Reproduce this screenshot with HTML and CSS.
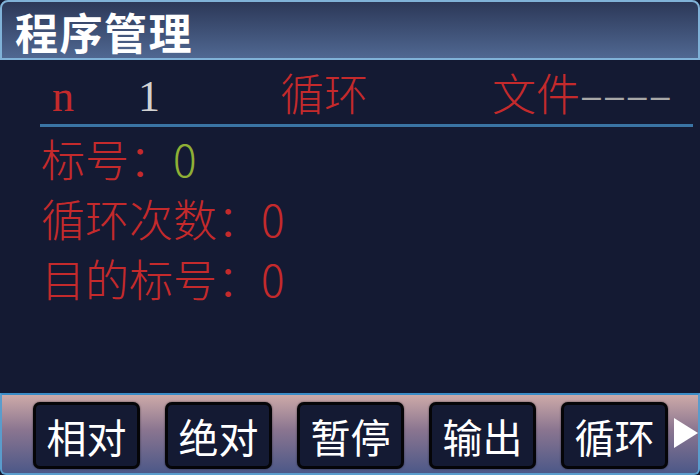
FILE: index.html
```html
<!DOCTYPE html>
<html lang="zh">
<head>
<meta charset="utf-8">
<link rel="stylesheet" href="styles.css">
</head>
<body>
<div class="screen">
  <div class="header"><span class="title">程序管理</span></div>
  <div class="main">
    <div class="row">
      <span class="c-n">n</span>
      <span class="c-1">1</span>
      <span class="c-loop">循环</span>
      <span class="c-file">文件<span class="dash">––––</span></span>
    </div>
    <div class="rule"></div>
    <div class="fields">
      <div class="field">标号：<span class="green">0</span></div>
      <div class="field">循环次数：0</div>
      <div class="field">目的标号：0</div>
    </div>
  </div>
  <div class="bar">
    <div class="btn">相对</div>
    <div class="btn">绝对</div>
    <div class="btn">暂停</div>
    <div class="btn">输出</div>
    <div class="btn">循环</div>
    <div class="more"></div>
  </div>
</div>
</body>
</html>
```
FILE: styles.css
```css
html, body {
  margin: 0;
  padding: 0;
  background: #141a33;
}
body {
  width: 700px;
  height: 475px;
  overflow: hidden;
  font-family: "Noto Sans CJK SC", "Noto Sans", sans-serif;
}
.screen {
  display: flex;
  flex-direction: column;
  height: 475px;
}
.header {
  box-sizing: border-box;
  height: 60px;
  border: 2px solid #80b2d8;
  border-radius: 8px 8px 0 0;
  background: linear-gradient(#2c3858, #506892);
  display: flex;
  align-items: center;
  padding: 3px 0 0 13px;
}
.title {
  color: #fff;
  font-size: 43px;
  font-weight: 700;
  line-height: 53px;
  letter-spacing: 1.5px;
}
.main {
  flex: 1;
  display: flex;
  flex-direction: column;
}
.row {
  display: flex;
  align-items: baseline;
  height: 64px;
  color: #c42a2c;
  font-size: 44px;
  font-weight: 300;
  line-height: 64px;
  box-sizing: border-box;
}
.c-n {
  font-family: "Liberation Serif", serif;
  font-weight: 400;
  margin-left: 52px;
  width: 86px;
}
.c-1 {
  font-family: "Liberation Serif", serif;
  font-weight: 400;
  color: #d2d2d2;
  width: 142px;
}
.c-loop {
  width: 212px;
}
.c-file {
  display: flex;
  align-items: baseline;
}
.dash {
  color: #a8a8a8;
  font-family: "Liberation Sans", sans-serif;
  font-weight: 400;
  font-size: 34px;
  letter-spacing: 4px;
  margin-left: 2px;
  transform: translateY(-4px);
}
.rule {
  margin-left: 40px;
  width: 653px;
  height: 3px;
  background: #3a74a4;
}
.fields {
  padding-left: 41px;
  padding-top: 1px;
  color: #c42a2c;
  font-size: 44px;
  font-weight: 300;
}
.field {
  height: 60px;
  line-height: 60px;
}
.green {
  color: #8fb036;
}
.bar {
  box-sizing: border-box;
  height: 82px;
  border-top: 2px solid #3b8cc6;
  border-left: 2px solid #5a9ccc;
  border-right: 2px solid #5a9ccc;
  border-bottom: 2px solid #5a9ccc;
  border-radius: 0 0 6px 6px;
  background: linear-gradient(#cdaaa8 0%, #8a7590 45%, #4c5888 100%);
  display: flex;
  align-items: flex-start;
  padding: 7px 0 0 31px;
  gap: 25px;
}
.btn {
  box-sizing: border-box;
  width: 107px;
  height: 67px;
  border: 3px solid #050508;
  border-radius: 7px;
  background: #141a33;
  color: #fff;
  font-size: 40px;
  font-weight: 400;
  display: flex;
  align-items: center;
  justify-content: center;
  box-shadow: 0 0 2px rgba(0,0,0,0.6);
}
.more {
  width: 0;
  height: 0;
  margin-top: 16px;
  margin-left: -19px;
  border-top: 15px solid transparent;
  border-bottom: 15px solid transparent;
  border-left: 24px solid #ffffff;
}
```
